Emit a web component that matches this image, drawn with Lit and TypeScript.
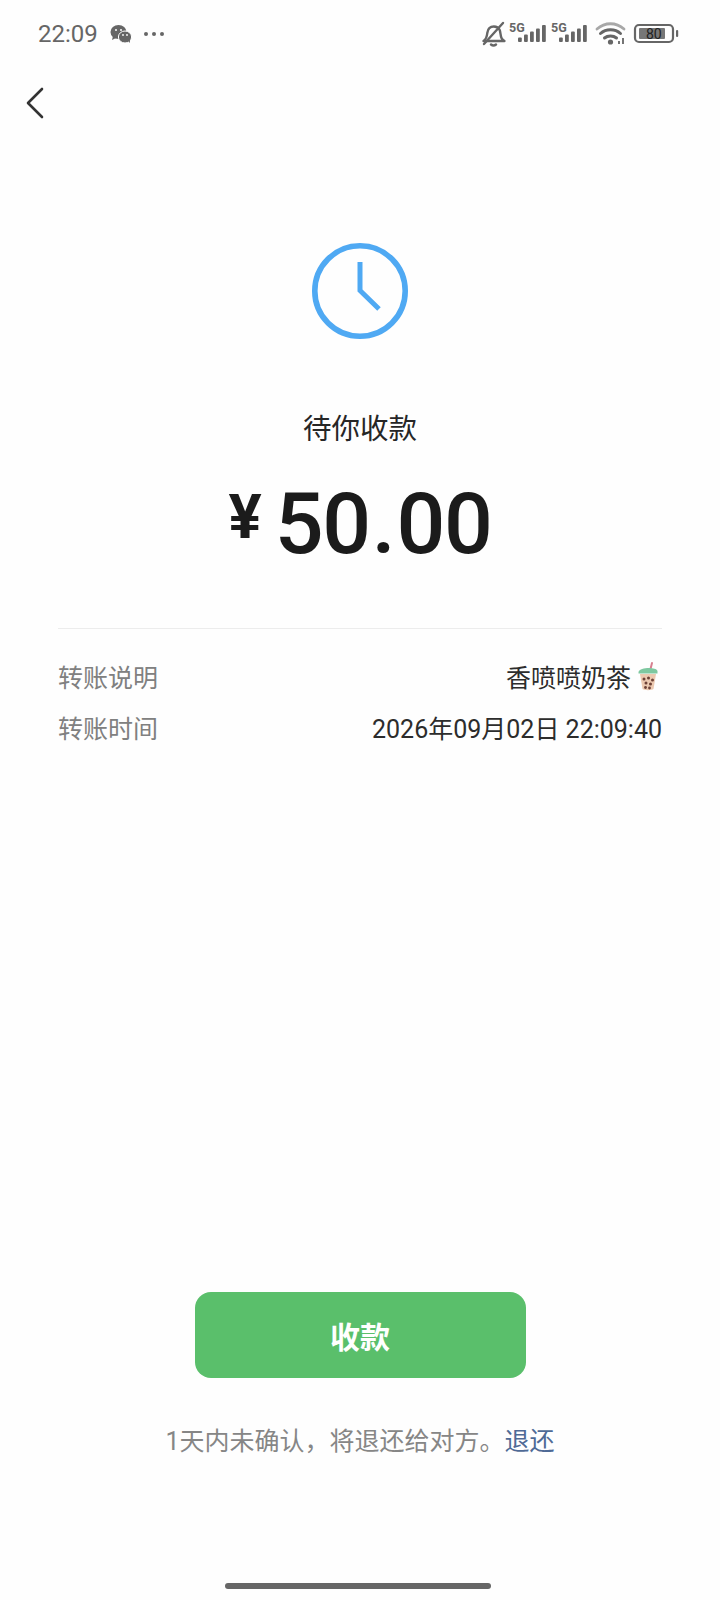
import { LitElement, html, css, svg } from "lit";
import { customElement } from "lit/decorators.js";

const bars = svg`
  <rect x="0" y="12.500" width="3.800" height="4.500" rx="1"/>
  <rect x="6" y="9.500" width="3.800" height="7.500" rx="1"/>
  <rect x="12" y="6.500" width="3.800" height="10.500" rx="1"/>
  <rect x="18" y="3.500" width="3.800" height="13.500" rx="1"/>
  <rect x="24" y="0" width="3.800" height="17" rx="1"/>`;

@customElement("app-root")
export class AppRoot extends LitElement {
  static styles = css`
    :host {
      display: block;
      width: 720px;
      height: 1600px;
      background: #fefefe;
      font-family: "Roboto", "Noto Sans CJK SC", sans-serif;
      color: #1c1c1c;
      overflow: hidden;
    }
    .page { height: 1600px; display: flex; flex-direction: column; align-items: stretch; }
    .status {
      height: 68px; flex: none; padding: 0 40px 0 38px;
      display: flex; align-items: center; justify-content: space-between; color: #666;
    }
    .status-left, .status-right { display: flex; align-items: center; }
    .time { font-size: 24px; width: 72px; }
    .wechat { width: 22px; height: 20px; margin-right: 11px; }
    .dots { width: 22px; height: 6px; }
    .status-right svg { display: block; }
    .nav { height: 70px; flex: none; padding-left: 25px; display: flex; align-items: center; }
    .back { width: 20px; height: 32px; }
    .clock { width: 100px; height: 100px; margin: 103px auto 0; display: block; flex: none; }
    .title {
      margin-top: 69px; text-align: center; font-size: 28.500px; line-height: 40px; color: #262626;
    }
    .amount {
      margin-top: 26px; display: flex; justify-content: center; align-items: flex-start;
      height: 96px; color: #1b1b1b; font-weight: 500;
    }
    .yen { font-size: 62px; line-height: 62px; margin-top: 10px; margin-right: 13px; font-weight: 700; }
    .num { font-size: 86px; line-height: 96px; letter-spacing: -1.300px; }
    .dot { margin: 0 2px; }
    .divider { height: 1px; background: #ececec; margin: 56px 58px 0; flex: none; }
    .rows { margin: 29px 58px 0; display: flex; flex-direction: column; gap: 15px; }
    .row { display: flex; justify-content: space-between; align-items: center; height: 36px; font-size: 25px; }
    .label { color: #808080; }
    .value { color: #2c2c2c; display: flex; align-items: center; }
    .tea { width: 28px; height: 30px; margin-left: 3px; }
    .spacer { flex: 1; }
    .btn {
      align-self: center; width: 331px; height: 86px; border-radius: 16px; background: #5abf6b;
      color: #fff; font-size: 30px; font-weight: 700; display: flex; align-items: center; justify-content: center;
      border: none; font-family: inherit; flex: none; padding-bottom: 2px;
    }
    .note { margin-top: 44px; text-align: center; font-size: 25px; line-height: 40px; color: #868686; }
    .note span { color: #4f6a96; }
    .home-wrap {
      height: 44px; margin-top: 94px; display: flex; justify-content: center; align-items: flex-end;
      padding-bottom: 11px; box-sizing: border-box; flex: none;
    }
    .home { width: 266px; height: 6px; border-radius: 3px; background: #666; margin-right: 4px; }
  `;

  render() {
    return html`
      <div class="page">
        <div class="status">
          <div class="status-left">
            <span class="time">22:09</span>
            <svg class="wechat" viewBox="0 0 22 20" fill="#666">
              <ellipse cx="8.500" cy="8" rx="8" ry="7"/>
              <path d="M3 12l-1 4 4-2z"/>
              <ellipse cx="15" cy="13" rx="6.600" ry="6" stroke="#fefefe" stroke-width="1"/>
              <path d="M18 17l2 2-.2-4z"/>
              <circle cx="6" cy="6" r="1" fill="#fefefe"/><circle cx="11" cy="6" r="1" fill="#fefefe"/>
              <circle cx="13" cy="11" r=".9" fill="#fefefe"/><circle cx="17" cy="11" r=".9" fill="#fefefe"/>
            </svg>
            <svg class="dots" viewBox="0 0 22 6" fill="#666">
              <circle cx="3" cy="3" r="2"/><circle cx="11" cy="3" r="2"/><circle cx="19" cy="3" r="2"/>
            </svg>
          </div>
          <div class="status-right">
            <svg width="198" height="26" viewBox="0 0 198 26" fill="#666">
              <g fill="none" stroke="#666" stroke-width="2.400" stroke-linecap="round" stroke-linejoin="round">
                <path d="M1.500 20c3-2 3.400-4 3.800-8 .5-4 3-6.500 6.600-6.500 2.500 0 4.600 1.200 5.800 3.500.8 2 .8 6 1.800 8 .6 1.500 1.500 2.200 3 3z"/>
                <path d="M2 23L21 2"/>
                <path d="M9 23.500c1.500 1.300 3.500 1.300 5 0"/>
              </g>
              <text x="27" y="11" font-size="12.500" font-weight="700" font-family="Roboto" fill="#666">5G</text>
              <g transform="translate(36 4)">${bars}</g>
              <text x="69" y="11" font-size="12.500" font-weight="700" font-family="Roboto" fill="#666">5G</text>
              <g transform="translate(77 4)">${bars}</g>
              <g fill="none" stroke-linecap="round">
                <path d="M115 8c8-7 19-7 27 0" stroke="#a8a8a8" stroke-width="2.800"/>
                <path d="M118.500 12.500c5.500-5 14.500-5 20 0" stroke="#666" stroke-width="3"/>
                <path d="M122.500 17c3.300-2.800 8.700-2.800 12 0" stroke="#666" stroke-width="3"/>
              </g>
              <circle cx="128.500" cy="21" r="2.600"/>
              <path d="M137 23v-3M141 23v-6" stroke="#666" stroke-width="1.800"/>
              <rect x="153" y="4" width="38" height="17" rx="4" fill="none" stroke="#666" stroke-width="2.200"/>
              <rect x="157" y="7" width="26" height="11" rx="1" fill="#777"/>
              <text x="164" y="17.500" font-size="14" font-family="Roboto" fill="#222">80</text>
              <rect x="194" y="9" width="2.200" height="7" rx="1"/>
            </svg>
          </div>
        </div>

        <div class="nav">
          <svg class="back" viewBox="0 0 20 32" fill="none" stroke="#333" stroke-width="2.600" stroke-linecap="round" stroke-linejoin="round">
            <path d="M17 2L3 16 17 30"/>
          </svg>
        </div>

        <svg class="clock" viewBox="0 0 100 100" fill="none" stroke="#4fa9f3">
          <circle cx="50" cy="50" r="45.200" stroke-width="5.600"/>
          <path d="M50 21V49.500L69 68" stroke-width="5" stroke-linejoin="miter"/>
        </svg>

        <div class="title">待你收款</div>
        <div class="amount"><span class="yen">¥</span><span class="num">50<span class="dot">.</span>00</span></div>
        <div class="divider"></div>

        <div class="rows">
          <div class="row">
            <span class="label">转账说明</span>
            <span class="value">香喷喷奶茶
              <svg class="tea" viewBox="0 0 28 30">
                <path d="M16.500 8l1.500-6" stroke="#d77f8f" stroke-width="2" stroke-linecap="round"/>
                <path d="M4.500 11c1-4.500 17-5.500 19-1v2.500h-19z" fill="#7ec8a0"/>
                <path d="M6 13h16l-2.500 15c-2 1.500-9 1.500-11 0z" fill="#ecc9b0"/>
                <g fill="#6d4136">
                  <circle cx="10" cy="18" r="1.500"/><circle cx="14.500" cy="17" r="1.500"/><circle cx="18.500" cy="19" r="1.500"/>
                  <circle cx="12" cy="22" r="1.500"/><circle cx="16.500" cy="23" r="1.500"/>
                  <circle cx="11.500" cy="26.500" r="1.400"/><circle cx="15.500" cy="27" r="1.400"/>
                </g>
              </svg>
            </span>
          </div>
          <div class="row">
            <span class="label">转账时间</span>
            <span class="value">2026年09月02日 22:09:40</span>
          </div>
        </div>

        <div class="spacer"></div>
        <button class="btn">收款</button>
        <div class="note">1天内未确认，将退还给对方。<span>退还</span></div>
        <div class="home-wrap"><div class="home"></div></div>
      </div>
    `;
  }
}
